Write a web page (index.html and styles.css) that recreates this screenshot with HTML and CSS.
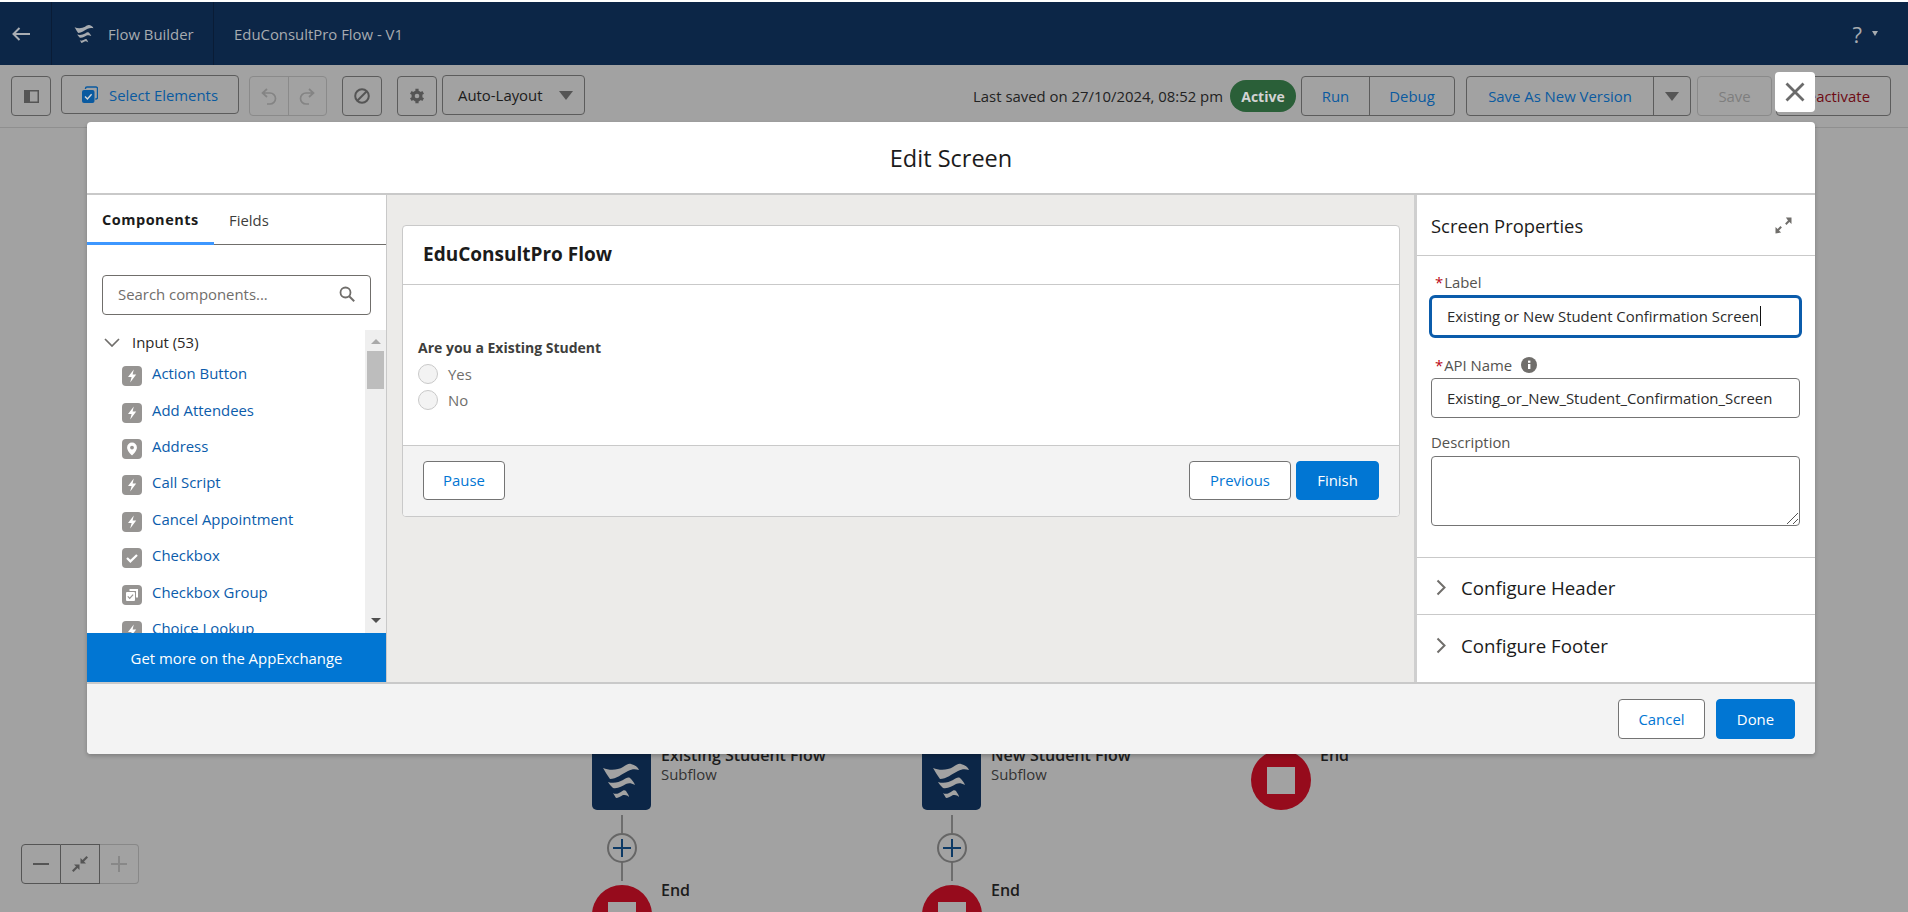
FILE: index.html
```html
<!DOCTYPE html>
<html lang="en">
<head>
<meta charset="utf-8">
<title>Flow Builder</title>
<link rel="stylesheet" href="styles.css">
</head>
<body>
<svg class="defs" width="0" height="0" aria-hidden="true">
  <symbol id="waves" viewBox="8 10 42 42">
    <path d="M11 18C18 21 26 20 31 17 34 15 37 13 39 14 43 15 46 17 47 20 43 19 40 19 36 21 30 24 24 29 18 29 15 25 13 21 11 18Z"/>
    <path d="M16 32C22 34 27 32 31 30 34 28 36 27 38 28 40 30 42 32 43 35 39 33 37 33 34 34 30 36 26 39 21 38 19 36 17 34 16 32Z"/>
    <path d="M21 43C24 45 27 43 29 42 31 40 33 40 34 41 35 43 37 45 37 47 35 45 33 45 31 45 29 46 26 48 24 48 23 46 22 45 21 43Z"/>
  </symbol>
  <symbol id="bolt" viewBox="0 0 20 20"><rect width="20" height="20" rx="4" fill="#969492"/><path d="M11.800 3.600 6 11h3.600l-1.400 5.400L14.200 8.400h-3.600z" fill="#fff"/></symbol>
  <symbol id="pin" viewBox="0 0 20 20"><rect width="20" height="20" rx="4" fill="#969492"/><path d="M10 3.600a4.900 4.900 0 0 0-4.900 4.900c0 3.100 3.200 6.300 4.400 7.600.3.300.7.300 1 0 1.200-1.300 4.400-4.500 4.400-7.600A4.900 4.900 0 0 0 10 3.600Z" fill="#fff"/><circle cx="10" cy="8.600" r="1.900" fill="#969492"/></symbol>
  <symbol id="check" viewBox="0 0 20 20"><rect width="20" height="20" rx="4" fill="#969492"/><path d="m5 10 3.400 3.400L15 7" fill="none" stroke="#fff" stroke-width="2.200"/></symbol>
  <symbol id="group" viewBox="0 0 20 20"><rect width="20" height="20" rx="4" fill="#969492"/><path d="M7.500 4h8.500v8.500h-2V6H7.500z" fill="#fff"/><rect x="4" y="7" width="9" height="9" rx="1" fill="#fff"/><path d="m5.800 11.400 1.900 1.900 3.400-3.600" fill="none" stroke="#969492" stroke-width="1.200"/></symbol>
</svg>

<div class="strip"></div>
<header class="topbar">
  <div class="back">
    <svg width="18" height="14" viewBox="0 0 18 14"><path d="M7.500 1 1.500 7l6 6M2 7h16" fill="none" stroke="#a9adb3" stroke-width="2"/></svg>
  </div>
  <div class="app">
    <svg class="wave-logo" width="22" height="22"><use href="#waves"/></svg>
    <span>Flow Builder</span>
  </div>
  <div class="flow-name">EduConsultPro Flow - V1</div>
  <div class="help">?<span class="help-caret"></span></div>
</header>

<div class="toolbar">
  <button class="tb tb-square"><svg width="15" height="13" viewBox="0 0 15 13"><rect x=".75" y=".75" width="13.500" height="11.500" fill="none" stroke="#555" stroke-width="1.500"/><rect x="1" y="1" width="5" height="11" fill="#555"/></svg></button>
  <button class="tb tb-select up">
    <svg width="16" height="17" viewBox="0 0 16 17"><path d="M3.500 3V2.500A1.500 1.500 0 0 1 5 1h9a1.500 1.500 0 0 1 1.500 1.500v9A1.500 1.500 0 0 1 14 13h-.7" fill="none" stroke="#0a5aa0" stroke-width="1.400"/><rect x="0" y="4" width="12.500" height="13" rx="2" fill="#0a5aa0"/><path d="m3 10.500 2.400 2.400 4.200-4.600" fill="none" stroke="#d8d8d8" stroke-width="1.400"/></svg>
    <span>Select Elements</span>
  </button>
  <div class="tb-group tb-off tb-undo">
    <button class="seg"><svg width="16" height="17" viewBox="0 0 16 17"><path d="M6 1 1.500 5 6 9M2 5h7a5.500 5.500 0 0 1 0 11H6" fill="none" stroke="#848484" stroke-width="1.700"/></svg></button>
    <button class="seg"><svg width="16" height="17" viewBox="0 0 16 17"><path d="M10 1l4.500 4L10 9M14 5H7a5.500 5.500 0 0 0 0 11h3" fill="none" stroke="#848484" stroke-width="1.700"/></svg></button>
  </div>
  <button class="tb tb-square tb-stop"><svg width="16" height="16" viewBox="0 0 16 16"><circle cx="8" cy="8" r="6.800" fill="none" stroke="#555" stroke-width="2"/><path d="M3.500 12.500l9-9" stroke="#555" stroke-width="2"/></svg></button>
  <button class="tb tb-square tb-gear"><svg width="16" height="16" viewBox="0 0 16 16"><circle cx="8" cy="8" r="5.500" fill="#555"/><path d="M8 .8v14.400M1.800 4.400l12.400 7.200M1.800 11.600l12.400-7.200" stroke="#555" stroke-width="3.200"/><circle cx="8" cy="8" r="2.300" fill="#a2a2a2"/></svg></button>
  <button class="tb tb-auto up"><span>Auto-Layout</span><i class="caret caret-md"></i></button>

  <div class="saved">Last saved on 27/10/2024, 08:52 pm</div>
  <div class="pill">Active</div>
  <div class="tb-group tb-run">
    <button class="seg seg-run">Run</button>
    <button class="seg seg-debug">Debug</button>
  </div>
  <div class="tb-group tb-version">
    <button class="seg seg-version">Save As New Version</button>
    <button class="seg seg-more"><i class="caret caret-md"></i></button>
  </div>
  <button class="tb tb-save">Save</button>
  <button class="tb tb-deactivate">Deactivate</button>
</div>

<main class="canvas">
  <div class="node n-existing">
    <svg class="node-icon" width="59" height="60"><use href="#waves" x="8" y="10" width="42" height="42"/></svg>
    <div class="node-text"><b>Existing Student Flow</b><span>Subflow</span></div>
  </div>
  <div class="node n-new">
    <svg class="node-icon" width="59" height="60"><use href="#waves" x="8" y="10" width="42" height="42"/></svg>
    <div class="node-text"><b>New Student Flow</b><span>Subflow</span></div>
  </div>
  <div class="node n-end-top">
    <div class="end-dot"><i></i></div>
    <div class="node-text"><b>End</b></div>
  </div>
  <div class="conn c-1"><svg width="32" height="66" viewBox="0 0 32 66"><path d="M16 0v66" stroke="#6d6d6d" stroke-width="2"/><circle cx="16" cy="33" r="14" fill="#a2a2a2" stroke="#666" stroke-width="2"/><path d="M16 24v18M7 33h18" stroke="#0d3a66" stroke-width="2"/></svg></div>
  <div class="conn c-2"><svg width="32" height="66" viewBox="0 0 32 66"><path d="M16 0v66" stroke="#6d6d6d" stroke-width="2"/><circle cx="16" cy="33" r="14" fill="#a2a2a2" stroke="#666" stroke-width="2"/><path d="M16 24v18M7 33h18" stroke="#0d3a66" stroke-width="2"/></svg></div>
  <div class="node n-end-1">
    <div class="end-dot"><i></i></div>
    <div class="node-text"><b>End</b></div>
  </div>
  <div class="node n-end-2">
    <div class="end-dot"><i></i></div>
    <div class="node-text"><b>End</b></div>
  </div>
  <div class="zoomer">
    <button class="z-btn"><svg width="16" height="2"><rect width="16" height="2" fill="#555"/></svg></button>
    <button class="z-btn"><svg width="18" height="18" viewBox="0 0 18 18"><path d="M17 2.500 15.500 1l-4 4L9.500 3v5.500H15l-2-2zM1 15.500 2.500 17l4-4 2 2V9.500H3l2 2z" fill="#555"/></svg></button>
    <button class="z-btn z-off"><svg width="16" height="16"><path d="M8 0v16M0 8h16" stroke="#888" stroke-width="2"/></svg></button>
  </div>
</main>

<section class="modal">
  <button class="close"><svg width="20" height="20" viewBox="0 0 20 20"><path d="M1.500 1.500l17 17M18.500 1.500l-17 17" stroke="#6b6b6b" stroke-width="2.800"/></svg></button>
  <h1 class="modal-title">Edit Screen</h1>
  <div class="modal-body">
    <aside class="palette">
      <div class="tabs">
        <div class="tab tab-on">Components</div>
        <div class="tab">Fields</div>
      </div>
      <div class="search">
        <span>Search components...</span>
        <svg width="16" height="16" viewBox="0 0 16 16"><circle cx="6.500" cy="6.500" r="5" fill="none" stroke="#706e6b" stroke-width="1.800"/><path d="m10.200 10.200 5 5" stroke="#706e6b" stroke-width="2"/></svg>
      </div>
      <div class="list-wrap">
        <div class="list">
          <div class="group-head">
            <svg width="16" height="9" viewBox="0 0 16 9"><path d="M1 1l7 7 7-7" fill="none" stroke="#706e6b" stroke-width="1.700"/></svg>
            <span>Input (53)</span>
          </div>
          <a class="row"><svg width="20" height="20"><use href="#bolt"/></svg><span>Action Button</span></a>
          <a class="row"><svg width="20" height="20"><use href="#bolt"/></svg><span>Add Attendees</span></a>
          <a class="row"><svg width="20" height="20"><use href="#pin"/></svg><span>Address</span></a>
          <a class="row"><svg width="20" height="20"><use href="#bolt"/></svg><span>Call Script</span></a>
          <a class="row"><svg width="20" height="20"><use href="#bolt"/></svg><span>Cancel Appointment</span></a>
          <a class="row"><svg width="20" height="20"><use href="#check"/></svg><span>Checkbox</span></a>
          <a class="row"><svg width="20" height="20"><use href="#group"/></svg><span>Checkbox Group</span></a>
          <a class="row"><svg width="20" height="20"><use href="#bolt"/></svg><span>Choice Lookup</span></a>
        </div>
        <div class="track">
          <i class="arrow arrow-up"></i>
          <div class="thumb"></div>
          <i class="arrow arrow-down"></i>
        </div>
      </div>
      <div class="exchange">Get more on the AppExchange</div>
    </aside>

    <div class="stage">
      <div class="card">
        <div class="card-head">EduConsultPro Flow</div>
        <div class="card-body">
          <div class="question">Are you a Existing Student</div>
          <label class="radio"><i></i>Yes</label>
          <label class="radio"><i></i>No</label>
        </div>
        <div class="card-foot">
          <button class="btn btn-pause">Pause</button>
          <div class="spacer"></div>
          <button class="btn btn-prev">Previous</button>
          <button class="btn btn-primary btn-finish">Finish</button>
        </div>
      </div>
    </div>

    <aside class="props">
      <div class="props-head">
        <span>Screen Properties</span>
        <svg width="17" height="17" viewBox="0 0 17 17"><path d="M16.500.5v6.600l-2.100-2.100-2.900 2.900-1.400-1.400 2.900-2.900L10.900.5zM.5 16.500V9.900l2.100 2.100 2.900-2.900 1.400 1.400-2.900 2.900 2.100 2.100z" fill="#706e6b"/></svg>
      </div>
      <div class="fields">
        <div class="f-label f-first"><em>*</em>Label</div>
        <div class="input input-focus"><span class="caret-text">Existing or New Student Confirmation Screen</span></div>
        <div class="f-label f-api"><em>*</em>API Name <svg width="16" height="16" viewBox="0 0 16 16"><circle cx="8" cy="8" r="8" fill="#706e6b"/><rect x="7" y="7" width="2.400" height="5" fill="#fff"/><rect x="7" y="3.600" width="2.400" height="2.200" fill="#fff"/></svg></div>
        <div class="input">Existing_or_New_Student_Confirmation_Screen</div>
        <div class="f-label f-desc">Description</div>
        <div class="textarea"><svg width="13" height="13" viewBox="0 0 13 13"><path d="M1 12 12 1M7 12l5-5" stroke="#555" stroke-width="1"/></svg></div>
      </div>
      <div class="section section-first"><svg width="11" height="17" viewBox="0 0 11 17"><path d="M1.500 1.500l7 7-7 7" fill="none" stroke="#706e6b" stroke-width="2"/></svg><span>Configure Header</span></div>
      <div class="section"><svg width="11" height="17" viewBox="0 0 11 17"><path d="M1.500 1.500l7 7-7 7" fill="none" stroke="#706e6b" stroke-width="2"/></svg><span>Configure Footer</span></div>
    </aside>
  </div>
  <footer class="modal-foot">
    <button class="btn btn-cancel">Cancel</button>
    <button class="btn btn-primary btn-done">Done</button>
  </footer>
</section>
</body>
</html>
```

FILE: styles.css
```css
* { box-sizing: border-box; }
html, body { margin: 0; padding: 0; }
body {
  position: relative;
  width: 1908px;
  height: 912px;
  overflow: hidden;
  display: flex;
  flex-direction: column;
  background: #a2a2a2;
  font-family: "Open Sans", "Noto Sans", sans-serif;
  font-size: 14.900px;
  font-weight: 400;
  color: #1b1b1b;
}
button { font: inherit; background: none; padding: 0; color: inherit; }
.defs { position: absolute; }
.strip { height: 2px; background: #fff; flex: none; }

/* top bar */
.topbar {
  flex: none;
  height: 63px;
  background: #0c2647;
  display: flex;
  align-items: center;
  color: #a7abb0;
}
.back { width: 52px; height: 100%; border-right: 1px solid #0a1c36; display: flex; align-items: center; padding-left: 12px; }
.app { width: 162px; height: 100%; border-right: 1px solid #0a1c36; display: flex; align-items: center; padding-left: 21px; gap: 13px; }
.wave-logo { fill: #a7abb0; flex: none; }
.flow-name { margin-left: 20px; }
.help { margin-left: auto; margin-right: 30px; font-size: 22px; display: flex; align-items: center; gap: 10px; }
.help-caret { border: 3.500px solid transparent; border-top: 5px solid #a7abb0; border-bottom: 0; }

/* toolbar */
.toolbar {
  flex: none;
  height: 63px;
  border-bottom: 1px solid #8f8f8f;
  padding: 11px 17px 0 11px;
  display: flex;
  align-items: flex-start;
  background: #a2a2a2;
}
.tb, .tb-group {
  height: 40px;
  border: 1px solid #5c5c5c;
  border-radius: 4px;
  display: flex;
  align-items: center;
  justify-content: center;
  flex: none;
}
.up { margin-top: -1px; }
.tb-square { width: 40px; }
.tb-select { width: 178px; height: 39px; margin-left: 10px; gap: 11px; color: #0a5aa0; }
.tb-group { overflow: hidden; }
.seg { border: 0; height: 100%; display: flex; align-items: center; justify-content: center; flex: none; }
.seg + .seg { border-left: 1px solid #5c5c5c; }
.tb-off { border-color: #8a8a8a; }
.tb-undo { width: 78px; margin-left: 10px; }
.tb-undo .seg { width: 50%; flex: 1; }
.tb-undo .seg + .seg { border-left-color: #8a8a8a; }
.tb-stop { margin-left: 15px; }
.tb-gear { margin-left: 15px; }
.tb-auto { width: 143px; margin-left: 5px; justify-content: space-between; padding: 0 11px 0 15px; color: #1b1b1b; }
.caret { display: block; }
.caret-md { border-left: 7px solid transparent; border-right: 7px solid transparent; border-top: 9px solid #555; }
.saved { margin-left: auto; line-height: 40px; white-space: nowrap; color: #222; }
.pill {
  margin: 4px 0 0 7px;
  width: 66px;
  height: 32px;
  border-radius: 16px;
  background: #2a5f38;
  color: #d3d3d3;
  font-weight: 700;
  font-size: 14px;
  display: flex;
  align-items: center;
  justify-content: center;
  flex: none;
}
.tb-run { width: 154px; margin-left: 5px; color: #0a5aa0; }
.seg-run { width: 67px; }
.seg-debug { flex: 1; }
.tb-version { width: 225px; margin-left: 11px; color: #0a5aa0; }
.seg-version { width: 186px; }
.seg-more { flex: 1; }
.tb-save { width: 75px; margin-left: 6px; border-color: #8a8a8a; color: #7e7e7e; }
.tb-deactivate { width: 115px; margin-left: 4px; color: #6e0b14; }

/* canvas */
.canvas { position: relative; flex: 1; }
.node { position: absolute; display: flex; gap: 10px; align-items: flex-start; }
.node-icon { background: #0c2647; fill: #a2a2a2; border-radius: 0 0 5px 5px; flex: none; }
.node-text { display: flex; flex-direction: column; line-height: 20px; color: #333; white-space: nowrap; margin-top: -5px; }
.node-text b { color: #1c1c1c; font-weight: 600; font-size: 16px; }
.node-text span { margin-top: -1px; }
.n-existing { left: 592px; top: 622px; }
.n-new { left: 922px; top: 622px; }
.n-end-top { left: 1251px; top: 622px; }
.n-end-1 { left: 592px; top: 757px; }
.n-end-2 { left: 922px; top: 757px; }
.end-dot { width: 60px; height: 60px; border-radius: 50%; background: #960b1c; display: flex; align-items: center; justify-content: center; flex: none; margin-right: -1px; }
.end-dot i { width: 28px; height: 27px; background: #a2a2a2; display: block; }
.conn { position: absolute; width: 32px; height: 66px; line-height: 0; }
.c-1 { left: 606px; top: 687px; }
.c-2 { left: 936px; top: 687px; }
.zoomer { position: absolute; left: 21px; top: 716px; width: 118px; height: 40px; display: flex; }
.z-btn { flex: 1; height: 100%; border: 1px solid #555; border-left: 0; display: flex; align-items: center; justify-content: center; }
.z-btn:first-child { border-left: 1px solid #555; border-radius: 4px 0 0 4px; }
.z-off { border-color: #888; border-radius: 0 4px 4px 0; }

/* modal */
.modal {
  position: absolute;
  left: 87px;
  top: 122px;
  width: 1728px;
  height: 632px;
  background: #fff;
  border-radius: 4px;
  box-shadow: 0 2px 4px rgba(0,0,0,.22);
  display: flex;
  flex-direction: column;
}
.close {
  position: absolute;
  right: 0;
  top: -50px;
  width: 40px;
  height: 40px;
  border: 0;
  border-radius: 4px;
  background: #fff;
  display: flex;
  align-items: center;
  justify-content: center;
}
.modal-title {
  flex: none;
  margin: 0;
  height: 73px;
  border-bottom: 2px solid #c9c9c9;
  text-align: center;
  font-size: 23.500px;
  font-weight: 400;
  line-height: 72px;
  color: #1b1b1b;
}
.modal-body { flex: 1; display: flex; min-height: 0; }
.modal-foot {
  flex: none;
  height: 72px;
  border-top: 2px solid #c9c9c9;
  background: #f3f3f3;
  border-radius: 0 0 4px 4px;
  display: flex;
  justify-content: flex-end;
  align-items: center;
  gap: 11px;
  padding-right: 20px;
}

/* palette */
.palette { width: 300px; flex: none; border-right: 1px solid #c9c9c9; display: flex; flex-direction: column; }
.tabs { height: 50px; border-bottom: 1px solid #706e6b; display: flex; flex: none; }
.tab { padding-left: 15px; line-height: 50px; color: #3e3e3c; }
.tab-on { width: 127px; flex: none; font-weight: 700; font-size: 14.500px; letter-spacing: .5px; color: #1b1b1b; box-shadow: inset 0 -3px 0 #3d97ff; margin-bottom: -1px; height: 50px; }
.search {
  flex: none;
  margin: 30px 15px 0;
  height: 40px;
  border: 1px solid #706e6b;
  border-radius: 4px;
  display: flex;
  align-items: center;
  justify-content: space-between;
  padding: 0 15px 2px;
  color: #706e6b;
}
.list-wrap { flex: 1; min-height: 0; margin-top: 15px; display: flex; overflow: hidden; }
.list { flex: 1; min-width: 0; overflow: hidden; }
.group-head { height: 24px; margin-bottom: 2px; display: flex; align-items: center; padding-left: 17px; gap: 12px; color: #2b2826; }
.row { height: 36.400px; display: flex; align-items: center; padding-left: 35px; gap: 10px; color: #0b5cab; white-space: nowrap; }
.row svg { flex: none; position: relative; top: 2px; }
.row span { position: relative; top: -1px; }
.track { width: 21px; flex: none; background: #efefef; display: flex; flex-direction: column; align-items: center; }
.thumb { width: 17px; height: 38px; background: #bdbdbd; margin-top: 7px; }
.arrow { display: block; border-left: 5px solid transparent; border-right: 5px solid transparent; }
.arrow-up { border-bottom: 5px solid #a9a9a9; margin-top: 9px; }
.arrow-down { border-top: 5px solid #505050; margin-top: auto; margin-bottom: 10px; }
.exchange { flex: none; height: 49px; background: #0176d3; color: #fff; display: flex; align-items: center; justify-content: center; }

/* stage */
.stage { flex: 1; background: #ecebe9; padding: 30px 14px 0 15px; min-width: 0; }
.card { height: 292px; border: 1px solid #c9c9c9; border-radius: 4px; background: #fff; display: flex; flex-direction: column; overflow: hidden; }
.card-head { flex: none; height: 59px; border-bottom: 1px solid #c9c9c9; padding-left: 20px; line-height: 57px; font-size: 19px; font-weight: 700; color: #1b1b1b; }
.card-body { flex: none; height: 160px; padding: 53px 0 0 15px; }
.question { line-height: 20px; font-size: 14px; font-weight: 700; color: #3e3e3c; margin-bottom: 3px; }
.radio { height: 26px; display: flex; align-items: center; gap: 10px; color: #706e6b; }
.radio i { width: 20px; height: 20px; border-radius: 50%; border: 1px solid #c9c9c9; background: #f3f3f3; display: block; flex: none; }
.card-foot { flex: 1; border-top: 1px solid #c9c9c9; background: #f3f3f3; display: flex; align-items: center; padding: 0 20px 2px; }
.spacer { flex: 1; }
.btn { height: 40px; border: 1px solid #747474; border-radius: 4px; background: #fff; color: #0176d3; display: flex; align-items: center; justify-content: center; flex: none; }
.btn-primary { background: #0176d3; border-color: #0176d3; color: #fff; }
.btn-pause { width: 82px; height: 39px; }
.btn-prev { width: 102px; height: 39px; }
.btn-finish { width: 83px; height: 39px; margin-left: 5px; }
.btn-cancel { width: 87px; }
.btn-done { width: 79px; }

/* properties */
.props { width: 401px; flex: none; border-left: 3px solid #cfcfcf; display: flex; flex-direction: column; }
.props-head { flex: none; height: 61px; border-bottom: 1px solid #c9c9c9; display: flex; align-items: center; justify-content: space-between; padding: 0 23px 0 14px; font-size: 18.400px; font-weight: 400; }
.fields { flex: none; height: 302px; border-bottom: 1px solid #c9c9c9; padding: 0 15px 0 14px; }
.f-label { line-height: 20px; color: #54534f; display: flex; align-items: center; }
.f-label em { color: #ba0517; font-style: normal; margin-left: 4px; margin-right: 1px; }
.f-label svg { margin-left: 9px; }
.f-first { margin-top: 16px; margin-bottom: 3px; }
.f-api { margin-top: 17px; margin-bottom: 3px; }
.f-desc { margin-top: 14px; margin-bottom: 4px; }
.input { height: 40px; border: 1px solid #747474; border-radius: 4px; padding-left: 15px; line-height: 38px; color: #2b2b2b; white-space: nowrap; overflow: hidden; }
.input-focus { height: 43px; margin: 0 -2px; border: 3px solid #0b5cab; border-radius: 6px; line-height: 37px; padding-left: 15px; }
.caret-text { border-right: 1px solid #111; padding-right: 1px; }
.textarea { height: 70px; border: 1px solid #747474; border-radius: 4px; display: flex; align-items: flex-end; justify-content: flex-end; }
.section { flex: none; height: 57px; border-bottom: 1px solid #c9c9c9; display: flex; align-items: center; padding: 3px 0 0 19px; gap: 14px; font-size: 18.700px; font-weight: 400; }
.section:last-child { border-bottom: 0; }
```
